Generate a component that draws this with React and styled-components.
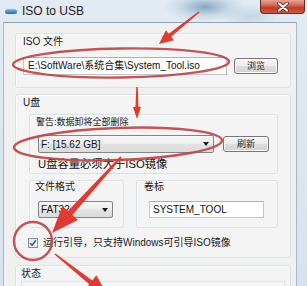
import React from "react";
import styled, { createGlobalStyle } from "styled-components";

const Global = createGlobalStyle`
  html, body { margin: 0; padding: 0; background: #ffffff; }
  body { font-family: "Liberation Sans", "Noto Sans CJK SC", sans-serif; }
`;

const Window = styled.div`
  width: 307px;
  height: 286px;
  overflow: hidden;
  position: relative;
  display: flex;
  flex-direction: column;
  background:
    radial-gradient(ellipse 42px 15px at 205px 7px, rgba(120, 156, 186, 0.85), rgba(160, 188, 210, 0.35) 60%, transparent 100%),
    radial-gradient(ellipse 30px 12px at 250px 16px, rgba(175, 198, 217, 0.6), transparent),
    linear-gradient(180deg, #e2ebf4 0%, #d6e2ee 100%);
`;

const TitleBar = styled.div`
  height: 22px;
  flex: none;
  display: flex;
  align-items: center;
  padding-left: 5px;
`;

const AppIcon = styled.div`
  width: 12px;
  height: 5px;
  border-radius: 3px;
  background: linear-gradient(180deg, #8fc3ec 0%, #3f86c8 60%, #2d6eab 100%);
  margin-right: 5px;
  margin-top: 1px;
`;

const Title = styled.div`
  font-size: 12px;
  line-height: 14px;
  color: #1b1b1b;
  font-family: "Liberation Sans", sans-serif;
`;

const CloseButton = styled.div`
  margin-left: auto;
  margin-right: 2px;
  align-self: flex-start;
  width: 45px;
  height: 14px;
  box-sizing: border-box;
  border: 1px solid #6d2b22;
  border-top: none;
  border-radius: 0 0 4px 4px;
  background: linear-gradient(180deg, #e6a395 0%, #d26a55 40%, #bd3b26 60%, #cf5a40 100%);
  display: flex;
  align-items: center;
  justify-content: center;
`;

const Frame = styled.div`
  flex: 1;
  display: flex;
  min-height: 0;
`;

const SideFrame = styled.div`
  width: ${(p) => p.$w}px;
  flex: none;
`;

const Client = styled.div`
  width: 294px;
  flex: none;
  box-sizing: border-box;
  background: #f0f0f0;
  border-top: 1px solid #8fa0b2;
  border-left: 1px solid #a9b8c6;
  border-right: 1px solid #a9b8c6;
  padding: 10px 0 0 10px;
  display: flex;
  flex-direction: column;
`;

const Group = styled.div`
  box-sizing: border-box;
  width: ${(p) => p.$w}px;
  height: ${(p) => p.$h}px;
  margin-top: ${(p) => p.$mt || 0}px;
  margin-left: ${(p) => p.$ml || 0}px;
  padding: ${(p) => p.$pt || 0}px 0 0 ${(p) => p.$pl || 0}px;
  border: 1px solid #dae2e8;
  border-radius: 3px;
  box-shadow: inset 1px 1px 0 #ffffff;
  background: #f4f4f4;
  display: flex;
  flex-direction: column;
  flex: none;
`;

const Label = styled.div`
  font-size: ${(p) => p.$fs || 10}px;
  line-height: ${(p) => p.$lh || 12}px;
  color: #1a1a1a;
  white-space: nowrap;
`;

const Row = styled.div`
  display: flex;
  align-items: center;
  margin-top: ${(p) => p.$mt || 0}px;
  margin-left: ${(p) => p.$ml || 0}px;
  gap: ${(p) => p.$gap || 0}px;
`;

const Edit = styled.div`
  box-sizing: border-box;
  width: ${(p) => p.$w}px;
  height: ${(p) => p.$h}px;
  border: 1px solid #c4c7cd;
  border-top-color: #aeb1b7;
  background: #ffffff;
  font-size: 10px;
  line-height: ${(p) => p.$h - 2}px;
  padding-left: ${(p) => p.$pl || 3}px;
  color: #111;
  white-space: nowrap;
  overflow: hidden;
`;

const Button = styled.div`
  box-sizing: border-box;
  width: ${(p) => p.$w}px;
  height: 16px;
  border: 1px solid #767676;
  border-radius: 3px;
  background: linear-gradient(180deg, #f6f6f6 0%, #ececec 48%, #dcdcdc 52%, #d2d2d2 100%);
  box-shadow: inset 0 0 0 1px #fbfbfb;
  font-size: 9px;
  line-height: 14px;
  text-align: center;
  color: #222;
`;

const Combo = styled.div`
  box-sizing: border-box;
  width: ${(p) => p.$w}px;
  height: ${(p) => p.$h}px;
  border: 1px solid #848484;
  border-radius: 2px;
  background: linear-gradient(180deg, #f7f7f7 0%, #eeeeee 48%, #e2e2e2 52%, #dcdcdc 100%);
  display: flex;
  align-items: center;
  padding: 0 4px 0 2px;
  font-size: 10px;
  color: #111;
`;

const ComboText = styled.span`
  flex: 1;
  white-space: nowrap;
  overflow: hidden;
`;

const Caret = styled.span`
  width: 0;
  height: 0;
  border-left: 3.5px solid transparent;
  border-right: 3.5px solid transparent;
  border-top: 4px solid #1c1c1c;
`;

const Notice = styled.div`
  margin-top: 4px;
  margin-left: 2px;
  font-size: 11.3px;
  line-height: 14px;
  color: #111;
  white-space: nowrap;
`;

const CheckBox = styled.div`
  box-sizing: border-box;
  width: 10px;
  height: 10px;
  border: 1px solid #8e8f8f;
  background: linear-gradient(135deg, #e0e4ea, #fbfbfb);
  display: flex;
  align-items: center;
  justify-content: center;
`;

const StatusBox = styled.div`
  margin-top: 1px;
  width: 262px;
  height: 20px;
  border: 1px solid #dde3e8;
  background: #f6f6f6;
`;

const Overlay = styled.svg`
  position: absolute;
  left: 0;
  top: 0;
  width: 307px;
  height: 286px;
  pointer-events: none;
`;

function arrowPoints(x1, y1, x2, y2, headLen, headW, tailW, neckW) {
  const dx = x2 - x1;
  const dy = y2 - y1;
  const L = Math.hypot(dx, dy);
  const ux = dx / L;
  const uy = dy / L;
  const px = -uy;
  const py = ux;
  const nx = x2 - ux * headLen;
  const ny = y2 - uy * headLen;
  const pts = [
    [x1 + (px * tailW) / 2, y1 + (py * tailW) / 2],
    [nx + (px * neckW) / 2, ny + (py * neckW) / 2],
    [nx + (px * headW) / 2, ny + (py * headW) / 2],
    [x2, y2],
    [nx - (px * headW) / 2, ny - (py * headW) / 2],
    [nx - (px * neckW) / 2, ny - (py * neckW) / 2],
    [x1 - (px * tailW) / 2, y1 - (py * tailW) / 2],
  ];
  return pts.map((p) => p.map((v) => v.toFixed(1)).join(",")).join(" ");
}

const arrows = [
  [199, 12, 159, 44, 14, 13, 1.5, 4],
  [137, 87, 137, 119, 12, 8, 1.5, 3],
  [121, 157, 52, 233, 27, 21, 2, 6],
  [55, 254, 108, 296, 22, 18, 1.5, 5],
];

export default function App() {
  return (
    <>
      <Global />
      <Window>
        <TitleBar>
          <AppIcon />
          <Title>ISO to USB</Title>
          <CloseButton>
            <svg width="14" height="10" viewBox="0 0 14 10">
              <path d="M3 1.5 L11 8.5 M11 1.5 L3 8.5" stroke="#5a1a12" strokeWidth="3.6" strokeLinecap="round" />
              <path d="M3 1.5 L11 8.5 M11 1.5 L3 8.5" stroke="#ffffff" strokeWidth="2.2" strokeLinecap="round" />
            </svg>
          </CloseButton>
        </TitleBar>
        <Frame>
          <SideFrame $w={3} />
          <Client>
            <Group $w={276} $h={55} $pt={2} $pl={7} $ml={1}>
              <Label>ISO 文件</Label>
              <Row $mt={9} $gap={7}>
                <Edit $w={204} $h={18} $pl={4}>{"E:\\SoftWare\\系统合集\\System_Tool.iso"}</Edit>
                <Button $w={44}>浏览</Button>
              </Row>
            </Group>

            <Group $w={276} $h={164} $pt={2} $pl={7} $ml={1} $mt={6}>
              <Label>U盘</Label>
              <Group $w={249} $h={60} $pt={2} $pl={6} $ml={6} $mt={5}>
                <Label $fs={9} $lh={11}>警告:数据卸将全部删除</Label>
                <Row $mt={7} $ml={2} $gap={9}>
                  <Combo $w={176} $h={18}>
                    <ComboText>F: [15.62 GB]</ComboText>
                    <Caret />
                  </Combo>
                  <Button $w={46}>刷新</Button>
                </Row>
                <Notice>U盘容量必须大于ISO镜像</Notice>
              </Group>
              <Row $mt={6} $ml={6} $gap={12}>
                <Group $w={95} $h={48} $pt={0} $pl={5}>
                  <Label>文件格式</Label>
                  <Row $mt={8} $ml={3}>
                    <Combo $w={75} $h={17}>
                      <ComboText>FAT32</ComboText>
                      <Caret />
                    </Combo>
                  </Row>
                </Group>
                <Group $w={142} $h={48} $pt={0} $pl={7}>
                  <Label>卷标</Label>
                  <Row $mt={8} $ml={5}>
                    <Edit $w={115} $h={17} $pl={3}>SYSTEM_TOOL</Edit>
                  </Row>
                </Group>
              </Row>
              <Row $mt={9} $ml={5} $gap={5}>
                <CheckBox>
                  <svg width="8" height="8" viewBox="0 0 8 8">
                    <path d="M1.2 4.2 L3.2 6.3 L6.8 1.2" stroke="#3a5796" strokeWidth="1.5" fill="none" />
                  </svg>
                </CheckBox>
                <Label>运行引导，只支持Windows可引导ISO镜像</Label>
              </Row>
            </Group>

            <Group $w={276} $h={40} $pt={2} $pl={5} $ml={1} $mt={7}>
              <Label>状态</Label>
              <StatusBox />
            </Group>
          </Client>
          <SideFrame $w={10} />
        </Frame>

        <Overlay viewBox="0 0 307 286">
          <g fill="none" stroke="#bd4747" strokeWidth="2.4" opacity="0.92">
            <ellipse cx="121" cy="63" rx="108" ry="14.5" transform="rotate(-0.8 121 63)" />
            <ellipse cx="118" cy="144" rx="104" ry="16" transform="rotate(-2 118 144)" />
            <circle cx="33" cy="241" r="19" />
          </g>
          <g fill="#e03b30">
            {arrows.map((a, i) => (
              <polygon key={i} points={arrowPoints(...a)} />
            ))}
          </g>
        </Overlay>
      </Window>
    </>
  );
}
